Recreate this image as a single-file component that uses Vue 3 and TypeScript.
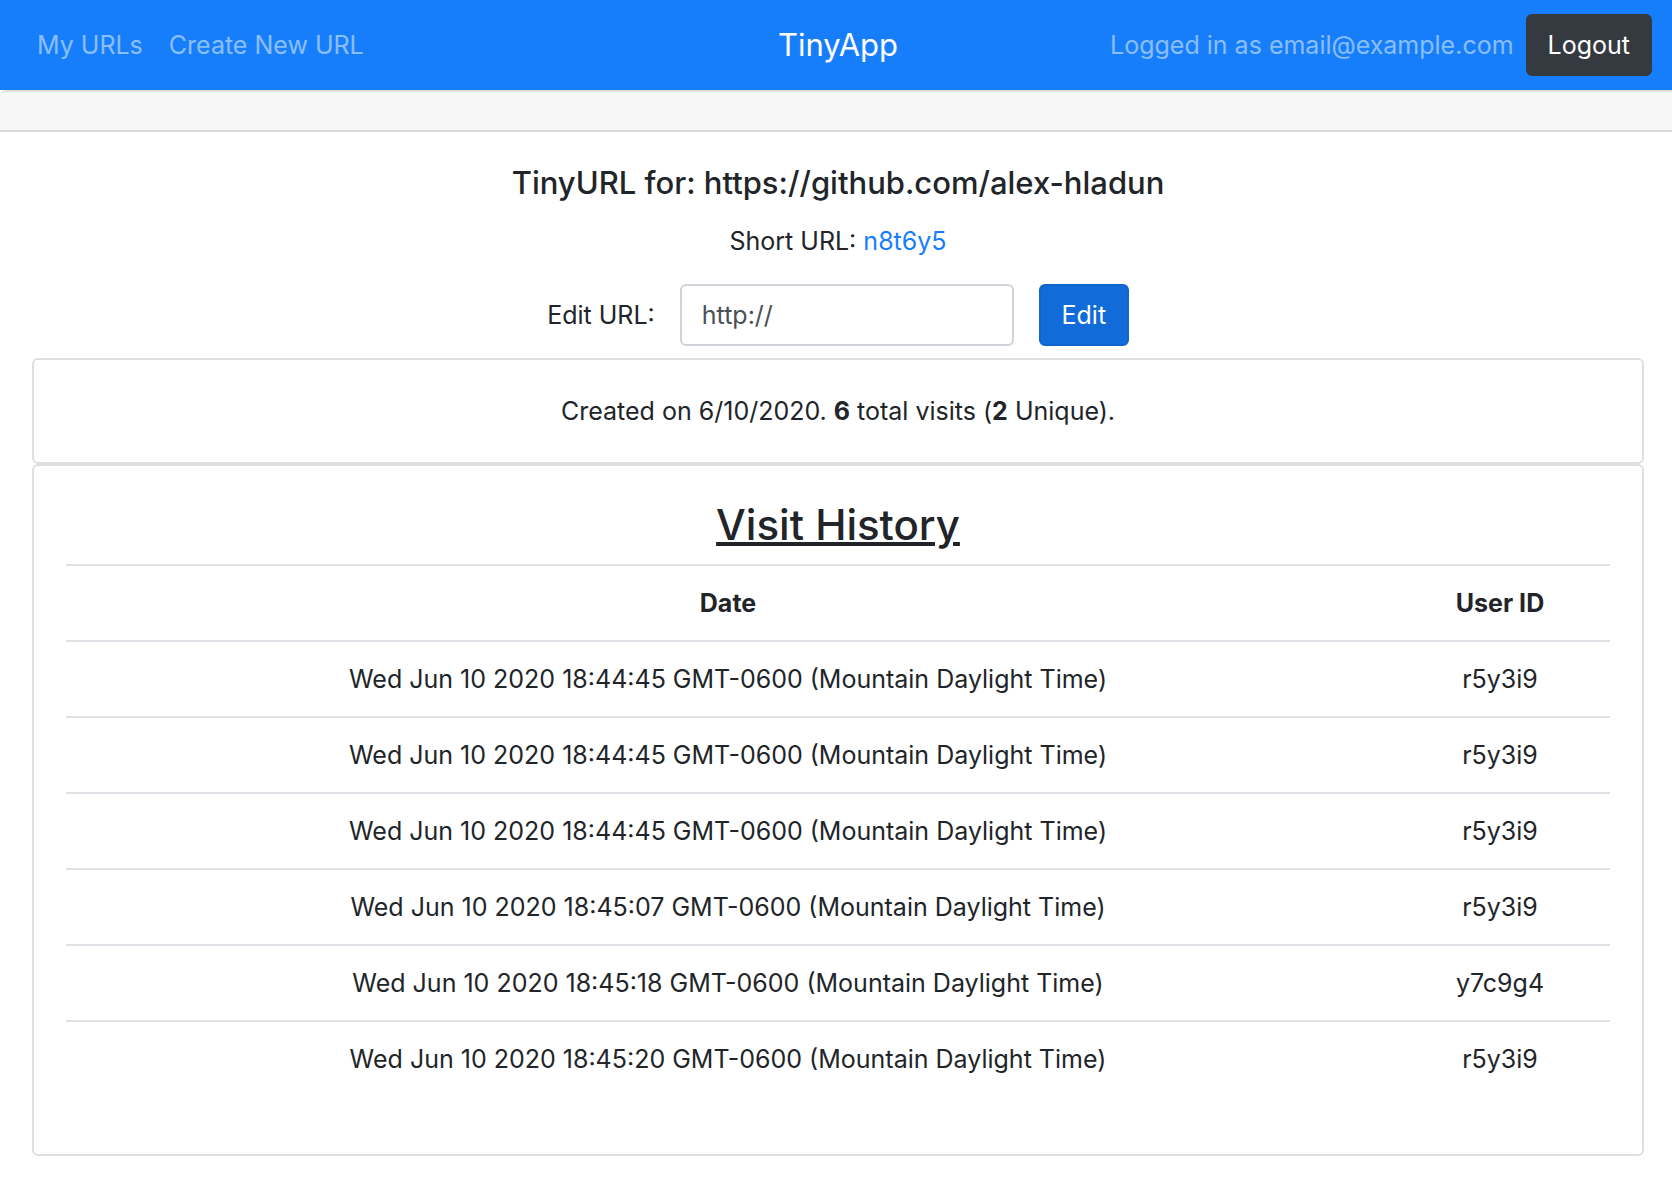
<script setup lang="ts">
import { ref } from 'vue'

interface Visit {
  date: string
  userId: string
}

const email = 'email@example.com'
const longUrl = 'https://github.com/alex-hladun'
const shortUrl = 'n8t6y5'
const newUrl = ref('')

const visits: Visit[] = [
  { date: 'Wed Jun 10 2020 18:44:45 GMT-0600 (Mountain Daylight Time)', userId: 'r5y3i9' },
  { date: 'Wed Jun 10 2020 18:44:45 GMT-0600 (Mountain Daylight Time)', userId: 'r5y3i9' },
  { date: 'Wed Jun 10 2020 18:44:45 GMT-0600 (Mountain Daylight Time)', userId: 'r5y3i9' },
  { date: 'Wed Jun 10 2020 18:45:07 GMT-0600 (Mountain Daylight Time)', userId: 'r5y3i9' },
  { date: 'Wed Jun 10 2020 18:45:18 GMT-0600 (Mountain Daylight Time)', userId: 'y7c9g4' },
  { date: 'Wed Jun 10 2020 18:45:20 GMT-0600 (Mountain Daylight Time)', userId: 'r5y3i9' },
]
</script>

<template>
  <div class="page">
    <header class="navbar">
      <nav class="links">
        <a class="nav-link" href="#urls">My URLs</a>
        <a class="nav-link" href="#new">Create New URL</a>
      </nav>
      <a class="brand" href="#home">TinyApp</a>
      <form class="session" @submit.prevent>
        <span class="user">Logged in as {{ email }}</span>
        <button class="btn btn-dark" type="submit">Logout</button>
      </form>
    </header>

    <div class="strip"></div>

    <main class="content">
      <h1 class="title">TinyURL for: {{ longUrl }}</h1>
      <p class="short">Short URL: <a class="short-link" href="#short">{{ shortUrl }}</a></p>

      <form class="edit" @submit.prevent>
        <label for="new-url">Edit URL:</label>
        <input id="new-url" v-model="newUrl" class="field" type="text" placeholder="http://" />
        <button class="btn btn-primary" type="submit">Edit</button>
      </form>

      <section class="card">
        <p class="stats">Created on 6/10/2020. <b>6</b> total visits (<b>2</b> Unique).</p>
      </section>

      <section class="card">
        <h2 class="heading">Visit History</h2>
        <table class="visits">
          <thead>
            <tr>
              <th scope="col">Date</th>
              <th class="user-col" scope="col">User ID</th>
            </tr>
          </thead>
          <tbody>
            <tr v-for="(visit, i) in visits" :key="i">
              <td>{{ visit.date }}</td>
              <td>{{ visit.userId }}</td>
            </tr>
          </tbody>
        </table>
      </section>
    </main>
  </div>
</template>

<style>
body {
  margin: 0;
  background: #fff;
  overflow-x: hidden;
}
</style>

<style scoped>
.page,
.page * {
  box-sizing: border-box;
}

.page {
  width: calc(100% + 4px);
  color: #212529;
  font-family: Inter, Roboto, "Liberation Sans", sans-serif;
  font-size: 25px;
  line-height: 38px;
}

a {
  text-decoration: none;
}

.navbar {
  display: grid;
  grid-template-columns: 1fr auto 1fr;
  align-items: center;
  padding: 14px 24px;
  background: #167efb;
}

.links {
  display: flex;
}

.nav-link {
  padding: 0 13px;
  color: rgba(255, 255, 255, 0.5);
}

.brand {
  color: #fff;
  font-size: 31px;
}

.session {
  display: flex;
  align-items: center;
  justify-content: flex-end;
  gap: 12px;
  margin: 0;
  white-space: nowrap;
}

.user {
  color: rgba(255, 255, 255, 0.5);
}

.btn {
  height: 62px;
  min-width: 90px;
  padding: 0 20px;
  border: 2px solid;
  border-radius: 6px;
  color: #fff;
  font: inherit;
}

.btn-dark {
  background: #353a40;
  border-color: #353a40;
}

.btn-primary {
  background: #116cd9;
  border-color: #1066cc;
}

.strip {
  height: 42px;
  border: solid #dfdfdf;
  border-width: 2px 0;
  border-bottom-color: #d8d8d8;
  border-radius: 6px 6px 0 0;
  background: #f7f7f7;
}

.content {
  padding: 32px 32px 22px;
  text-align: center;
}

.title {
  margin: 0 0 20px;
  font-size: 31px;
  font-weight: 500;
}

.short {
  margin: 0 0 24px;
}

.short-link {
  color: #167efb;
}

.edit {
  display: flex;
  align-items: center;
  justify-content: center;
  gap: 25px;
  margin: 0 0 12px;
}

.field {
  width: 334px;
  height: 62px;
  padding: 0 20px;
  border: 2px solid #ced4da;
  border-radius: 6px;
  background: #fff;
  color: #495057;
  font: inherit;
}

.field::placeholder {
  color: #495057;
  opacity: 1;
}

.card {
  padding: 32px;
  border: 2px solid #dfdfdf;
  border-radius: 6px;
}

.stats {
  margin: 0;
}

.heading {
  margin: 0 0 12px;
  font-size: 42px;
  font-weight: 500;
  line-height: 54px;
  text-decoration: underline;
  text-decoration-thickness: 4px;
}

.visits {
  width: 100%;
  margin-bottom: 26px;
  border-collapse: separate;
  border-spacing: 0;
}

.visits th,
.visits td {
  padding: 18px;
  border-top: 2px solid #dee2e6;
}

.visits th {
  font-weight: 700;
}

.visits .user-col {
  width: 220px;
}
</style>
